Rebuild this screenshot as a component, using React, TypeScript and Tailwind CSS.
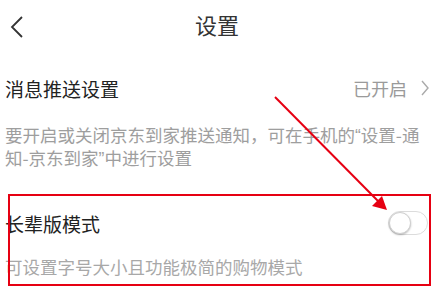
import React from "react";

const font = { fontFamily: '"Noto Sans CJK SC", "Noto Sans", sans-serif' };
const quote = { fontFamily: '"Liberation Sans", sans-serif' };

const Toggle = () => (
  <div className="w-[40px] h-[24px] rounded-full border border-[#dcdcdc] bg-white relative">
    <div className="absolute left-0 top-0 w-[22px] h-[22px] rounded-full bg-white border border-[#cfcfcf] shadow-[0_1px_2px_rgba(0,0,0,0.25)]" />
  </div>
);

const App = () => {
  return (
    <div
      className="relative w-[434px] h-[303px] bg-white overflow-hidden text-[#222]"
      style={font}
    >
      <div className="relative h-[55px] flex items-center justify-center">
        <svg
          className="absolute left-[10px] top-[15px]"
          width="14"
          height="24"
          viewBox="0 0 14 24"
        >
          <path d="M12 2 L2 12 L12 22" fill="none" stroke="#333" strokeWidth="1.8" />
        </svg>
        <span className="text-[22px] text-[#333] leading-none mt-[-8px]">设置</span>
      </div>

      <div className="flex items-center justify-between pl-[5px] pr-[5px] h-[36px] mt-[15px]">
        <span className="text-[19px] leading-none">消息推送设置</span>
        <div className="flex items-center gap-[14px]">
          <span className="text-[18px] text-[#9a9a9a] leading-none">已开启</span>
          <svg width="8" height="16" viewBox="0 0 8 16">
            <path d="M1 1 L7 8 L1 15" fill="none" stroke="#aaa" strokeWidth="1.4" />
          </svg>
        </div>
      </div>

      <p className="pl-[5px] mt-[18px] text-[17.5px] leading-[22px] text-[#9e9e9e] whitespace-nowrap">
        要开启或关闭京东到家推送通知，可在手机的<span style={quote}>“</span>设置-通
        <br />
        知-京东到家<span style={quote}>”</span>中进行设置
      </p>

      <div className="flex items-center justify-between pl-[5px] pr-[6px] h-[36px] mt-[35px]">
        <span className="text-[19px] leading-none">长辈版模式</span>
        <Toggle />
      </div>

      <p className="pl-[5px] mt-[15px] text-[17.5px] leading-[22px] text-[#a8a8a8]">
        可设置字号大小且功能极简的购物模式
      </p>

      <div className="absolute left-[8px] top-[194px] w-[423px] h-[92px] border-2 border-[#e60012]" />

      <svg className="absolute left-0 top-0" width="434" height="303">
        <line x1="275" y1="97" x2="378" y2="201" stroke="#e60012" strokeWidth="2" />
        <polygon points="387,210 372,206 382,196" fill="#e60012" />
      </svg>
    </div>
  );
};

export default App;
